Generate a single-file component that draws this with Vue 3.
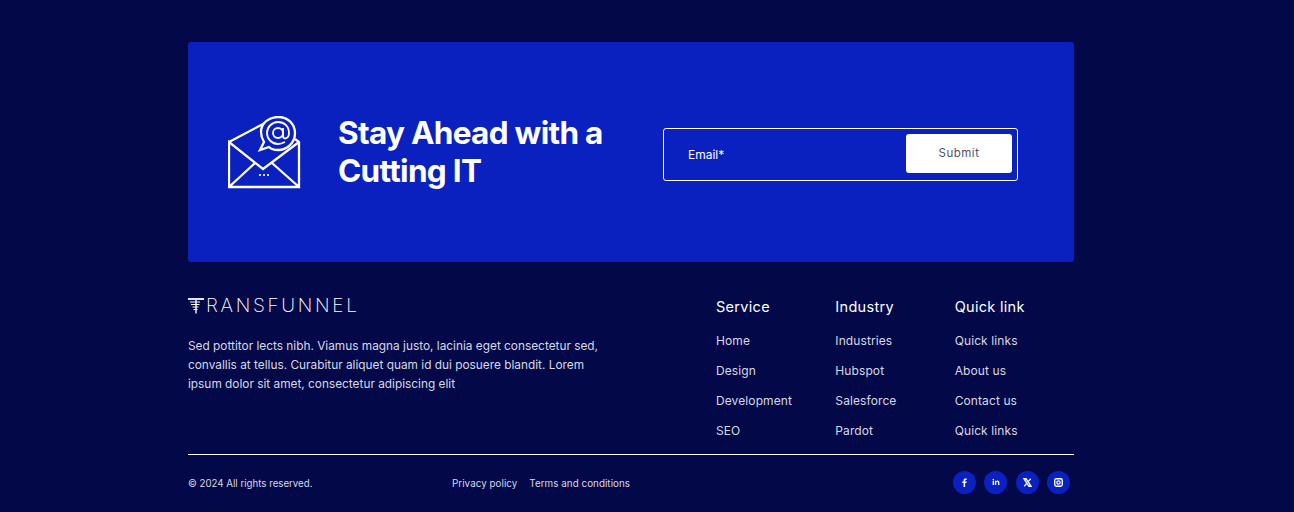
<script setup>
const columns = [
  { title: 'Service', links: ['Home', 'Design', 'Development', 'SEO'] },
  { title: 'Industry', links: ['Industries', 'Hubspot', 'Salesforce', 'Pardot'] },
  { title: 'Quick link', links: ['Quick links', 'About us', 'Contact us', 'Quick links'] },
]
</script>

<template>
  <div class="page">
    <div class="wrap">
      <section class="banner">
        <svg class="mail" width="74" height="74" viewBox="0 0 74 74" fill="none" stroke="#fff" stroke-width="2.3">
          <path d="M1 26 L37 7 M67 23 L71 26 V71 H1 V26 L35 53 L71 26 M1 71 L27 47 M71 71 L44 47" />
          <path d="M32 34 L36 26 C33 21 33 18 33 16 C33 7 41 1 50 1 C60 1 67 8 67 17 C67 26 60 34 50 34 C46 34 43 33 41 31 Z" fill="#0a21c0" />
          <circle cx="50" cy="17" r="5" stroke-width="1.8" />
          <path d="M55 12 V20 C55 24 61 23 61 17 C61 10 56 6 50 6 C44 6 39 11 39 17 C39 23 44 28 50 28 C53 28 55 27 57 26" stroke-width="1.8" />
          <path d="M31 59 H33 M35 59 H37 M39 59 H41" stroke="#d9dcf5" stroke-width="2" />
        </svg>
        <h2 class="title">Stay Ahead with a Cutting IT</h2>
        <form class="form" @submit.prevent>
          <span class="label">Email*</span>
          <button class="submit" type="submit">Submit</button>
        </form>
      </section>

      <div class="middle">
        <div class="about">
          <div class="logo">
            <svg width="16" height="16" viewBox="0 0 16 16" fill="none" stroke="#fff">
              <path d="M0 1 H16" stroke-width="1.8" />
              <path d="M2 4 H12 M3 6.5 H11.5 M4.5 9 H10.5 M5.5 11.5 H9.5" stroke-width="1.1" />
              <path d="M8 2 V15.5" stroke-width="1.4" />
            </svg>
            <span>RANSFUNNEL</span>
          </div>
          <p class="blurb">Sed pottitor lects nibh. Viamus magna justo, lacinia eget consectetur sed, convallis at tellus. Curabitur aliquet quam id dui posuere blandit. Lorem ipsum dolor sit amet, consectetur adipiscing elit</p>
        </div>
        <nav class="cols">
          <div v-for="col in columns" :key="col.title" class="col">
            <h4>{{ col.title }}</h4>
            <a v-for="(link, i) in col.links" :key="i" href="#">{{ link }}</a>
          </div>
        </nav>
      </div>

      <div class="bottom">
        <span class="copy">© 2024 All rights reserved.</span>
        <div class="legal">
          <a href="#">Privacy policy</a>
          <a href="#">Terms and conditions</a>
        </div>
        <div class="social">
          <a href="#"><svg width="9" height="9" viewBox="0 0 10 10" fill="#fff"><path d="M4 10 V5.6 H2.6 V4 H4 V2.8 C4 1.3 4.8 .6 6.1 .6 H7.4 V2.2 H6.5 C5.9 2.2 5.7 2.5 5.7 3 V4 H7.4 L7.1 5.6 H5.7 V10 Z" /></svg></a>
          <a href="#"><svg width="8" height="8" viewBox="0 0 10 10" fill="#fff"><path d="M.8 3.4 H2.5 V8.8 H.8 Z M1.65 .9 A1 1 0 1 1 1.65 2.9 A1 1 0 1 1 1.65 .9 Z M3.6 3.4 H5.2 V4.1 C5.6 3.5 6.2 3.2 7 3.2 C8.6 3.2 9.2 4.2 9.2 5.8 V8.8 H7.5 V6.1 C7.5 5.3 7.2 4.8 6.5 4.8 C5.7 4.8 5.3 5.3 5.3 6.1 V8.8 H3.6 Z" /></svg></a>
          <a href="#"><svg width="9" height="9" viewBox="0 0 10 10" fill="none" stroke="#fff"><path d="M1 .8 L3.4 .8 L9 9.2 L6.6 9.2 Z" stroke-width="1.5" /><path d="M8.6 .8 L5.8 4 M4.1 6 L1.4 9.2" stroke-width="1.4" /></svg></a>
          <a href="#"><svg width="9" height="9" viewBox="0 0 10 10" fill="none" stroke="#fff" stroke-width="1.5"><rect x=".8" y=".8" width="8.4" height="8.4" rx="2" /><circle cx="5" cy="5" r="1.8" /></svg></a>
        </div>
      </div>
    </div>
  </div>
</template>

<style>
html, body { background: #030948; }
</style>

<style scoped>
.page {
  background: #030948;
  height: 512px;
  overflow: hidden;
  font-family: Inter, "Noto Sans", sans-serif;
  color: #fff;
}

.wrap {
  width: 886px;
  margin-left: 188px;
  padding-top: 42px;
}

.banner {
  height: 220px;
  background: #0a21c0;
  border-radius: 3px;
  display: flex;
  align-items: center;
  padding-left: 40px;
}

.mail { flex: none; margin-top: 2px; }

.title {
  width: 325px;
  margin: 0 0 0 36px;
  font-size: 31.5px;
  line-height: 38px;
  font-weight: 700;
  letter-spacing: -0.7px;
}

.form {
  width: 355px;
  height: 53px;
  margin-top: 4px;
  box-sizing: border-box;
  border: 1px solid #fff;
  border-radius: 3px;
  display: flex;
  align-items: center;
  justify-content: space-between;
  padding: 0 5px 0 24px;
}

.label { font-size: 12px; }

.submit {
  width: 106px;
  height: 39px;
  margin-bottom: 2px;
  border: none;
  border-radius: 3px;
  background: #fff;
  color: #4c5168;
  font-family: inherit;
  font-size: 11.5px;
  letter-spacing: 0.5px;
}

.middle {
  display: flex;
  justify-content: space-between;
  height: 192px;
  border-bottom: 1px solid #fff;
}

.logo {
  display: flex;
  align-items: center;
  height: 17px;
  margin-top: 35px;
  font-size: 19px;
  font-weight: 200;
  letter-spacing: 2.7px;
}

.logo span { margin-left: 2px; }

.blurb {
  width: 420px;
  margin: 23px 0 0;
  font-size: 11.85px;
  line-height: 19px;
  color: #d6d8e6;
}

.cols {
  display: flex;
  width: 358px;
}

.col {
  width: 119.5px;
  display: flex;
  flex-direction: column;
  padding-top: 36px;
}

.col h4 {
  margin: 0 0 18px;
  font-size: 14.5px;
  line-height: 18px;
  font-weight: 400;
  letter-spacing: 0.3px;
}

.col a {
  height: 30px;
  line-height: 14px;
  font-size: 12px;
  letter-spacing: 0.1px;
  color: #d6d8e6;
  text-decoration: none;
}

.bottom {
  display: flex;
  align-items: center;
  height: 56px;
}

.copy {
  width: 264px;
  font-size: 9.7px;
  color: #d6d8e6;
}

.legal {
  display: flex;
  gap: 12px;
}

.legal a {
  font-size: 9.8px;
  letter-spacing: 0.05px;
  color: #d6d8e6;
  text-decoration: none;
}

.social {
  margin-left: auto;
  margin-right: 4px;
  margin-bottom: 2px;
  display: flex;
  gap: 8.3px;
}

.social a {
  width: 23px;
  height: 23px;
  border-radius: 50%;
  background: #0a21c0;
  display: flex;
  align-items: center;
  justify-content: center;
}
</style>
